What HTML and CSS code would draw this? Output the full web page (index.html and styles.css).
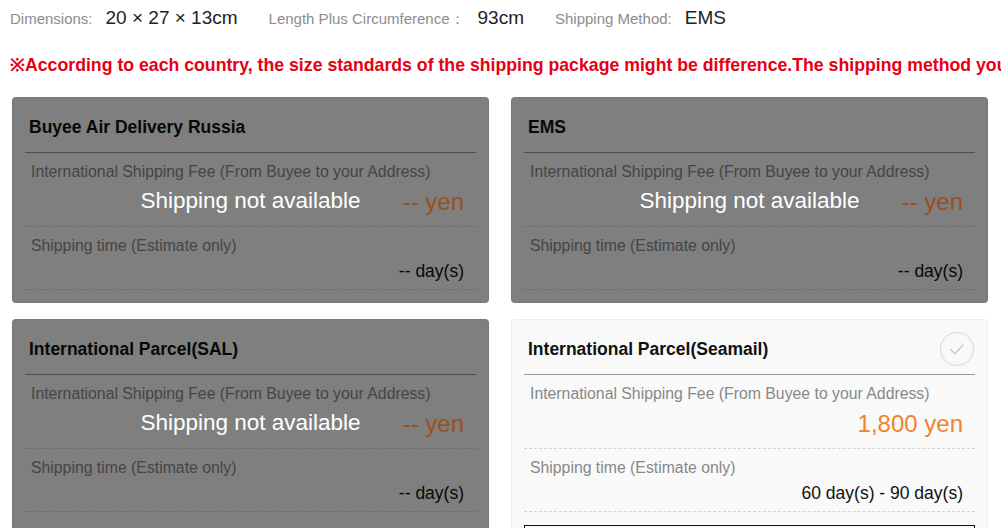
FILE: index.html
```html
<!DOCTYPE html>
<html lang="en">
<head>
<meta charset="utf-8">
<link rel="stylesheet" href="styles.css">
</head>
<body>
<div class="page">
  <div class="specs">
    <span class="spec"><span class="spec-label">Dimensions:</span><span class="spec-value">20 × 27 × 13cm</span></span>
    <span class="spec"><span class="spec-label">Length Plus Circumference：</span><span class="spec-value">93cm</span></span>
    <span class="spec"><span class="spec-label">Shipping Method:</span><span class="spec-value">EMS</span></span>
  </div>
  <div class="notice-wrap"><p class="notice">※According to each country, the size standards of the shipping package might be difference.The shipping method you choose may not be available.</p></div>
  <div class="cards">
    <div class="card card-disabled">
      <div class="card-head"><span class="card-title">Buyee Air Delivery Russia</span></div>
      <div class="row">
        <div class="row-label">International Shipping Fee (From Buyee to your Address)</div>
        <div class="row-value fee">-- yen</div>
      </div>
      <div class="row row-time">
        <div class="row-label">Shipping time (Estimate only)</div>
        <div class="row-value days">-- day(s)</div>
      </div>
      <div class="overlay"><span class="overlay-text">Shipping not available</span></div>
    </div>
    <div class="card card-disabled">
      <div class="card-head"><span class="card-title">EMS</span></div>
      <div class="row">
        <div class="row-label">International Shipping Fee (From Buyee to your Address)</div>
        <div class="row-value fee">-- yen</div>
      </div>
      <div class="row row-time">
        <div class="row-label">Shipping time (Estimate only)</div>
        <div class="row-value days">-- day(s)</div>
      </div>
      <div class="overlay"><span class="overlay-text">Shipping not available</span></div>
    </div>
    <div class="card card-disabled">
      <div class="card-head"><span class="card-title">International Parcel(SAL)</span></div>
      <div class="row">
        <div class="row-label">International Shipping Fee (From Buyee to your Address)</div>
        <div class="row-value fee">-- yen</div>
      </div>
      <div class="row row-time">
        <div class="row-label">Shipping time (Estimate only)</div>
        <div class="row-value days">-- day(s)</div>
      </div>
      <div class="overlay"><span class="overlay-text">Shipping not available</span></div>
    </div>
    <div class="card">
      <div class="card-head">
        <span class="card-title">International Parcel(Seamail)</span>
        <span class="check">
          <svg width="36" height="36" viewBox="0 0 36 36"><circle cx="18" cy="18" r="16.5" fill="none" stroke="#dcdcdc" stroke-width="1.2"/><path d="M11.5 18.5 L16 22.5 L24 14" fill="none" stroke="#c8c8c8" stroke-width="1.4" stroke-linecap="round" stroke-linejoin="round"/></svg>
        </span>
      </div>
      <div class="row">
        <div class="row-label">International Shipping Fee (From Buyee to your Address)</div>
        <div class="row-value fee">1,800 yen</div>
      </div>
      <div class="row row-time">
        <div class="row-label">Shipping time (Estimate only)</div>
        <div class="row-value days">60 day(s) - 90 day(s)</div>
      </div>
      <div class="option-box"></div>
    </div>
  </div>
</div>
</body>
</html>
```

FILE: styles.css
```css
html, body {
  margin: 0;
  padding: 0;
  background: #fff;
  overflow: hidden;
}
body {
  font-family: "Liberation Sans", Arial, sans-serif;
  color: #333;
}
.page {
  width: 1001px;
  height: 528px;
  overflow: hidden;
}
.specs {
  display: flex;
  align-items: baseline;
  gap: 31px;
  padding: 6px 0 0 10px;
  height: 24px;
  line-height: 24px;
  white-space: nowrap;
}
.spec {
  display: flex;
  align-items: baseline;
}
.spec-label {
  font-size: 15px;
  color: #8c8c8c;
  margin-right: 13px;
}
.spec-value {
  font-size: 19px;
  color: #222;
}
.notice-wrap {
  padding: 23px 0 0 10px;
  overflow: hidden;
}
.notice {
  margin: 0;
  height: 24px;
  line-height: 24px;
  font-size: 17.7px;
  font-weight: bold;
  color: #e60012;
  white-space: nowrap;
}
.cards {
  display: grid;
  grid-template-columns: 477px 477px;
  column-gap: 22px;
  row-gap: 16px;
  margin: 20px 0 0 12px;
}
.card {
  position: relative;
  background: #f9f9f9;
  border: 1px solid #ececec;
  border-radius: 4px;
  padding: 0 12px 12px;
}
.card-head {
  display: flex;
  align-items: center;
  justify-content: space-between;
  height: 48px;
  padding: 5px 0 1px 4px;
  border-bottom: 1px solid #999;
}
.card-title {
  font-size: 17.5px;
  font-weight: bold;
  color: #111;
}
.check {
  display: flex;
}
.row {
  padding: 8px 0 8px;
  border-bottom: 1px dashed #d4d4d4;
}
.row-label {
  font-size: 15.8px;
  line-height: 22px;
  color: #888;
  padding-left: 6px;
}
.row-value {
  text-align: right;
  padding-right: 12px;
}
.fee {
  font-size: 24px;
  line-height: 32px;
  margin-top: 3px;
  color: #f0822e;
}
.card-disabled .fee {
  position: relative;
  z-index: 1;
  color: #9a4f1c;
}
.row-time {
  padding: 8px 0 6px;
}
.days {
  font-size: 17.5px;
  line-height: 24px;
  margin-top: 2px;
  color: #111;
}
.option-box {
  height: 20px;
  margin-top: 13px;
  border: 1px solid #111;
}
.overlay {
  position: absolute;
  inset: -1px;
  border-radius: 4px;
  background: rgba(0, 0, 0, 0.49);
}
.overlay-text {
  position: absolute;
  left: 0;
  right: 0;
  top: 88px;
  text-align: center;
  font-size: 22.5px;
  line-height: 32px;
  color: #fff;
}
```
